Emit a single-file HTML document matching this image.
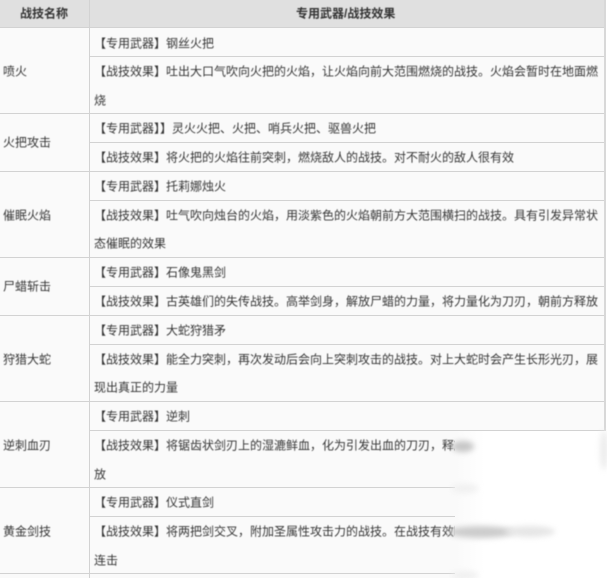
<!DOCTYPE html>
<html lang="zh">
<head>
<meta charset="utf-8">
<style>
html,body{margin:0;padding:0;background:#fff}
#p{position:relative;width:607px;height:578px;overflow:hidden;background:#fff;font-family:"Liberation Sans","Noto Sans CJK SC",sans-serif;font-size:12px;color:#363636}
#bg{position:absolute;left:0;top:0;width:604px;height:578px;background:#fafafa}
#h{position:absolute;left:0;top:0;width:604px;height:27px;background:#e0e0e0}
.hl{position:absolute;height:1px;background:#d2d2d2}
.vl{position:absolute;width:1px;background:#d2d2d2}
.t{position:absolute;white-space:nowrap;line-height:16px;height:16px;filter:blur(.4px);transform:translateY(-.6px)}
.b{font-weight:700;color:#333}
.f{position:absolute;background:linear-gradient(90deg,#fafafa 0,#fff 30px)}
.s{position:absolute;border-radius:50%;filter:blur(3px)}
</style>
</head>
<body>
<div id="p">
<div id="bg"></div>
<div id="h"></div>
<div class="vl" style="left:89px;top:0;height:578px"></div>
<div class="vl" style="left:604px;top:0;height:432px;width:2px;background:#d8d8d8"></div>

<div class="hl" style="left:0;top:27px;width:604px"></div>
<div class="hl" style="left:89px;top:56px;width:515px"></div>
<div class="hl" style="left:0;top:113px;width:604px"></div>
<div class="hl" style="left:89px;top:142px;width:515px"></div>
<div class="hl" style="left:0;top:171px;width:604px"></div>
<div class="hl" style="left:89px;top:200px;width:515px"></div>
<div class="hl" style="left:0;top:257px;width:604px"></div>
<div class="hl" style="left:89px;top:286px;width:515px"></div>
<div class="hl" style="left:0;top:315px;width:604px"></div>
<div class="hl" style="left:89px;top:344px;width:515px"></div>
<div class="hl" style="left:0;top:401px;width:604px"></div>
<div class="hl" style="left:89px;top:430px;width:515px"></div>
<div class="hl" style="left:0;top:487px;width:604px"></div>
<div class="hl" style="left:89px;top:516px;width:515px"></div>
<div class="hl" style="left:0;top:573px;width:604px"></div>

<div class="t b" style="left:20px;top:6px">战技名称</div>
<div class="t b" style="left:296px;top:6px">专用武器/战技效果</div>

<div class="t" style="left:3px;top:64px">喷火</div>
<div class="t" style="left:3px;top:135px">火把攻击</div>
<div class="t" style="left:3px;top:208px">催眠火焰</div>
<div class="t" style="left:3px;top:279px">尸蜡斩击</div>
<div class="t" style="left:3px;top:352px">狩猎大蛇</div>
<div class="t" style="left:3px;top:438px">逆刺血刃</div>
<div class="t" style="left:3px;top:524px">黄金剑技</div>

<div class="t" style="left:94px;top:36px">【专用武器】钢丝火把</div>
<div class="t" style="left:94px;top:64px">【战技效果】吐出大口气吹向火把的火焰，让火焰向前大范围燃烧的战技。火焰会暂时在地面燃</div>
<div class="t" style="left:94px;top:93px">烧</div>
<div class="t" style="left:94px;top:121px">【专用武器】】灵火火把、火把、哨兵火把、驱兽火把</div>
<div class="t" style="left:94px;top:150px">【战技效果】将火把的火焰往前突刺，燃烧敌人的战技。对不耐火的敌人很有效</div>
<div class="t" style="left:94px;top:179px">【专用武器】托莉娜烛火</div>
<div class="t" style="left:94px;top:208px">【战技效果】吐气吹向烛台的火焰，用淡紫色的火焰朝前方大范围横扫的战技。具有引发异常状</div>
<div class="t" style="left:94px;top:236px">态催眠的效果</div>
<div class="t" style="left:94px;top:265px">【专用武器】石像鬼黑剑</div>
<div class="t" style="left:94px;top:294px">【战技效果】古英雄们的失传战技。高举剑身，解放尸蜡的力量，将力量化为刀刃，朝前方释放</div>
<div class="t" style="left:94px;top:323px">【专用武器】大蛇狩猎矛</div>
<div class="t" style="left:94px;top:352px">【战技效果】能全力突刺，再次发动后会向上突刺攻击的战技。对上大蛇时会产生长形光刃，展</div>
<div class="t" style="left:94px;top:380px">现出真正的力量</div>
<div class="t" style="left:94px;top:409px">【专用武器】逆刺</div>
<div class="t" style="left:94px;top:438px">【战技效果】将锯齿状剑刃上的湿漉鲜血，化为引发出血的刀刃，释放</div>
<div class="t" style="left:94px;top:467px">放</div>
<div class="t" style="left:94px;top:495px">【专用武器】仪式直剑</div>
<div class="t" style="left:94px;top:524px">【战技效果】将两把剑交叉，附加圣属性攻击力的战技。在战技有效时</div>
<div class="t" style="left:94px;top:553px">连击</div>

<div class="f" style="left:455px;top:431px;width:152px;height:147px"></div>
<div class="s" style="left:452px;top:441px;width:22px;height:11px;background:#c6c6c6"></div>
<div class="s" style="left:448px;top:526px;width:66px;height:12px;background:#cccccc"></div>
<div class="s" style="left:505px;top:526px;width:50px;height:11px;background:#e6e6e6"></div>
<div class="s" style="left:452px;top:484px;width:26px;height:9px;background:#f0f0f0"></div>
<div class="s" style="left:452px;top:571px;width:26px;height:9px;background:#f0f0f0"></div>
<div class="s" style="left:600px;top:430px;width:8px;height:40px;background:#ececec"></div>
</div>
</body>
</html>
